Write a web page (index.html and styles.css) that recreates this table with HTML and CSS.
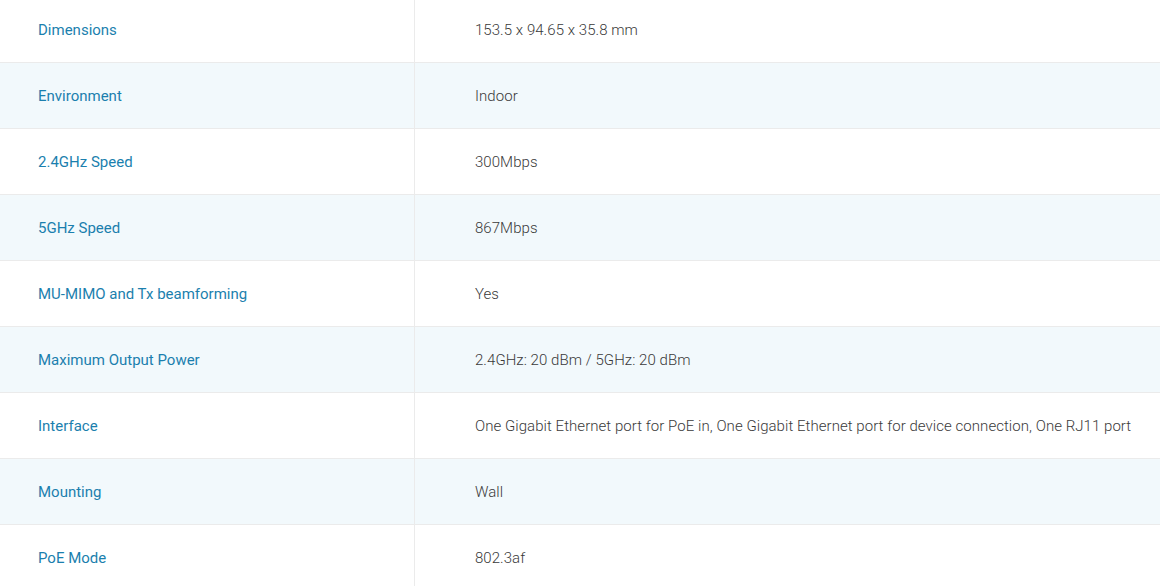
FILE: index.html
```html
<!DOCTYPE html>
<html>
<head>
<meta charset="utf-8">
<link rel="stylesheet" href="styles.css">
</head>
<body>
<div class="specs">
  <div class="row"><div class="label">Dimensions</div><div class="value">153.5 x 94.65 x 35.8 mm</div></div>
  <div class="row alt"><div class="label">Environment</div><div class="value">Indoor</div></div>
  <div class="row"><div class="label">2.4GHz Speed</div><div class="value">300Mbps</div></div>
  <div class="row alt"><div class="label">5GHz Speed</div><div class="value">867Mbps</div></div>
  <div class="row"><div class="label">MU-MIMO and Tx beamforming</div><div class="value">Yes</div></div>
  <div class="row alt"><div class="label">Maximum Output Power</div><div class="value">2.4GHz: 20 dBm / 5GHz: 20 dBm</div></div>
  <div class="row"><div class="label">Interface</div><div class="value">One Gigabit Ethernet port for PoE in, One Gigabit Ethernet port for device connection, One RJ11 port</div></div>
  <div class="row alt"><div class="label">Mounting</div><div class="value">Wall</div></div>
  <div class="row"><div class="label">PoE Mode</div><div class="value">802.3af</div></div>
</div>
</body>
</html>
```
FILE: styles.css
```css
html, body {
  margin: 0;
  padding: 0;
  background: #fff;
  overflow: hidden;
}
body {
  font-family: Roboto, "Liberation Sans", sans-serif;
  font-size: 15px;
}
.specs {
  margin-top: -3px;
  display: flex;
  flex-direction: column;
}
.row {
  display: grid;
  grid-template-columns: 415px 1fr;
  height: 65px;
  border-bottom: 1px solid #ebebeb;
  background: #fff;
}
.row.alt {
  background: #f2f9fc;
}
.label {
  display: flex;
  align-items: center;
  padding-left: 38px;
  color: #1b7fae;
  border-right: 1px solid #ebebeb;
}
.value {
  display: flex;
  align-items: center;
  padding-left: 60px;
  color: #3a3a3a;
  font-weight: 300;
  letter-spacing: 0.05px;
  white-space: nowrap;
}
```
